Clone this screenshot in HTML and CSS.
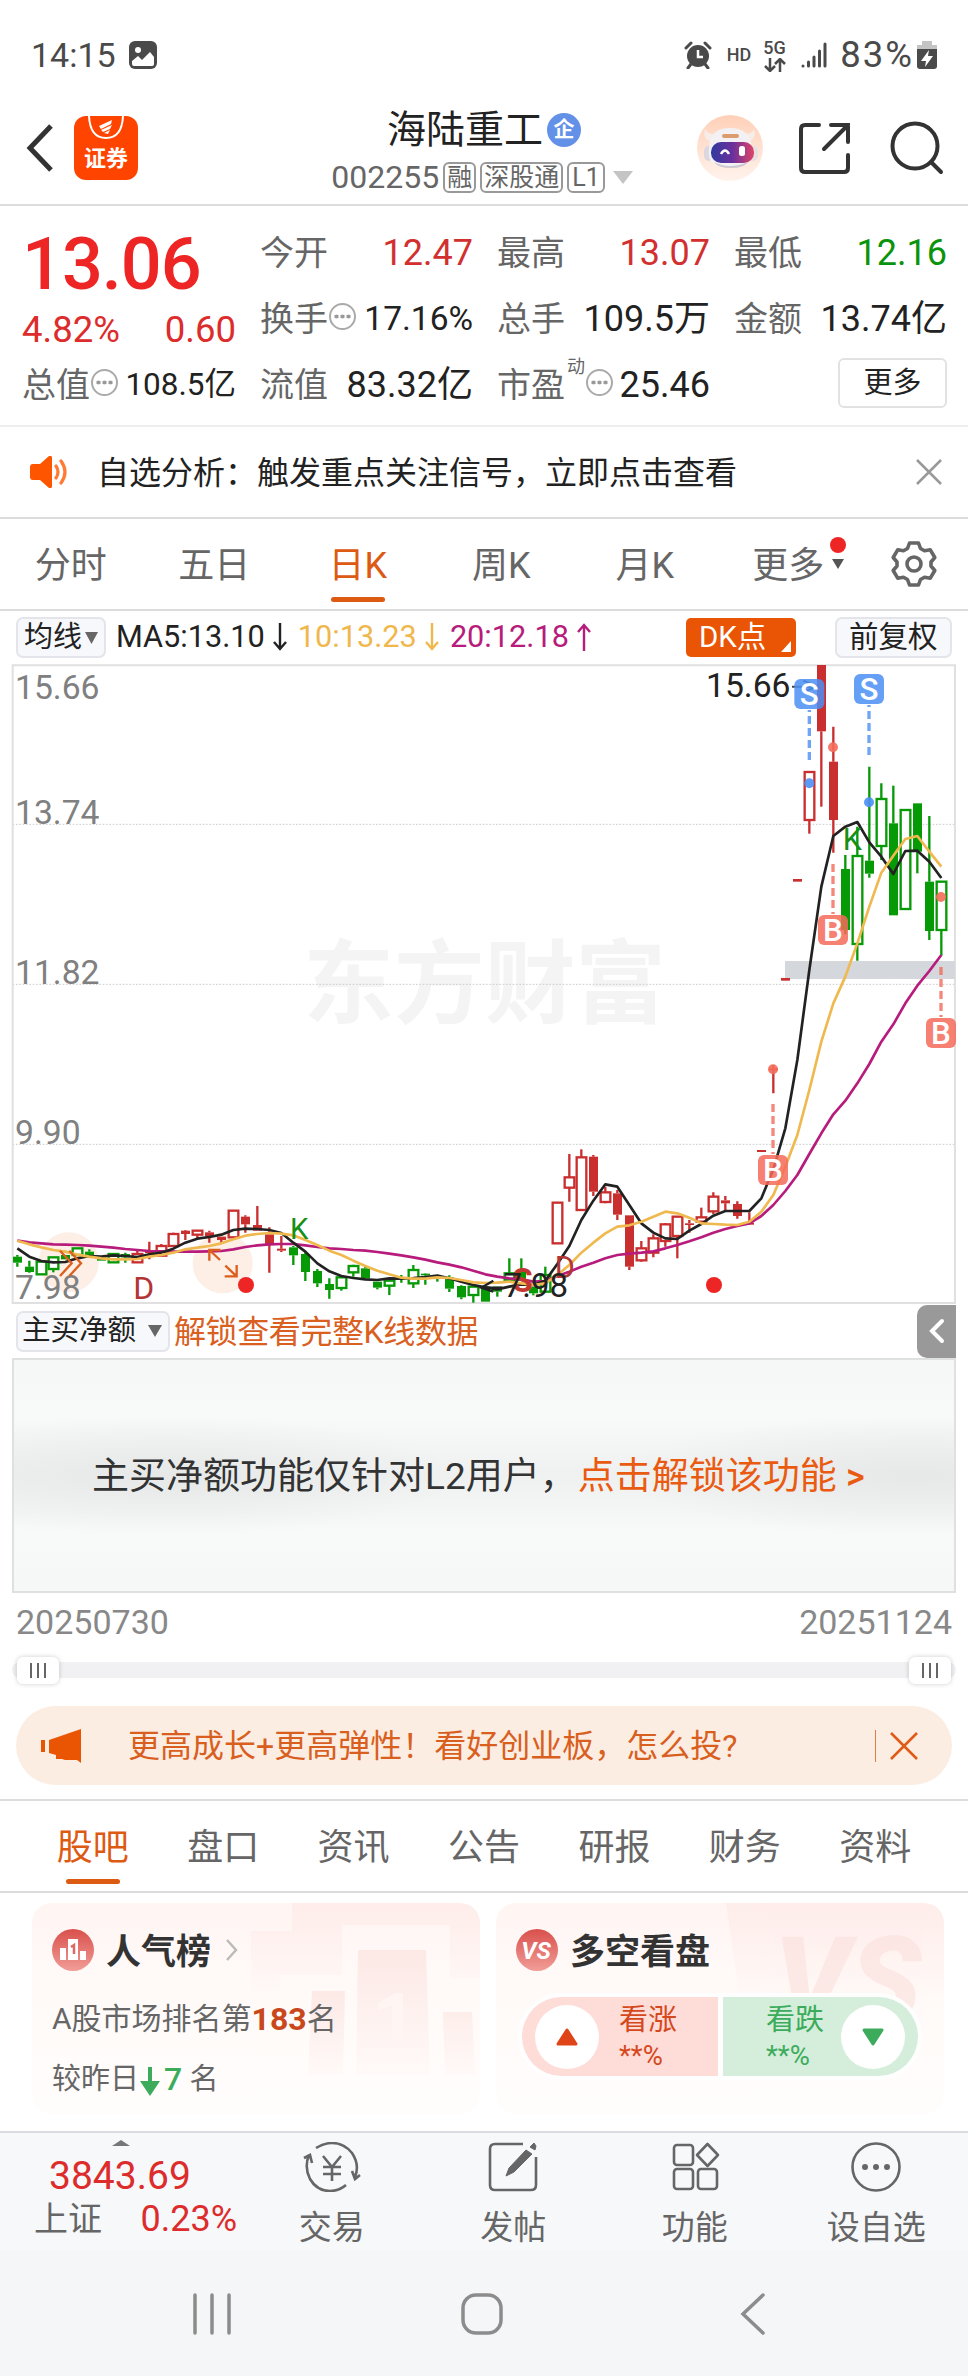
FILE: index.html
```html
<!DOCTYPE html>
<html lang="zh-CN">
<head>
    <meta charset="UTF-8" />
    <meta name="viewport" content="width=device-width, initial-scale=1.0" />
    <title>海陆重工 002255</title>
    <link rel="stylesheet" href="styles.css">
</head>
<body>
    <div class="status-bar">
        <span>14:15</span>
        <svg class="status-photo" width="28" height="28" viewBox="0 0 28 28">
            <rect width="28" height="28" rx="6" fill="#4a4a4a"/>
            <circle cx="9" cy="9" r="3" fill="#fff"/>
            <path d="M3 23v-3l6-5 4 4 8-8 4 5v7q0 2-2 2H5q-2 0-2-2z" fill="#fff"/>
        </svg>
        <div class="status-right">
            <svg width="28" height="28" viewBox="0 0 28 28">
                <circle cx="14" cy="15" r="11" fill="#4a4a4a"/>
                <path d="M2 7l5-5M26 7l-5-5M7 23l-3 4M21 23l3 4" stroke="#4a4a4a" stroke-width="3" stroke-linecap="round"/>
                <path d="M14 9v7h5" stroke="#fff" stroke-width="2.5" fill="none"/>
            </svg>
            <b class="status-hd">HD</b>
            <div class="status-5g">
                <b>5G</b>
                <svg width="24" height="14" viewBox="0 0 24 14" fill="none" stroke="#4a4a4a" stroke-width="2.5">
                    <path d="M7 0v12M2 8l5 5 5-5M17 14V2M12 6l5-5 5 5"/>
                </svg>
            </div>
            <svg width="27" height="26" viewBox="0 0 27 26" stroke="#4a4a4a" stroke-width="3" stroke-linecap="round">
                <path d="M2 24v0M7.500 24v-4M13 24v-9M18.500 24V9M24 24V2"/>
            </svg>
            <span class="status-pct">83%</span>
            <svg width="20" height="30" viewBox="0 0 20 30">
                <path d="M5 1h10v4h5v5H0V5h5z" fill="#c4c4c4"/>
                <path d="M0 9h20v17q0 3-3 3H3q-3 0-3-3z" fill="#4a4a4a"/>
                <path d="M12 10l-8 11h5l-1 6 8-11h-5z" fill="#fff"/>
            </svg>
        </div>
    </div>

    <header class="header">
        <div class="header-left">
            <svg width="28" height="50" viewBox="0 0 28 50" fill="none" stroke="#333" stroke-width="5">
                <path d="M25 3L4 25l21 22"/>
            </svg>
            <div class="app-logo">
                <svg width="44" height="26" viewBox="0 0 44 26" fill="none" stroke="#fff" stroke-width="2">
                    <path d="M5 0q1 22 17 22T39 0"/>
                    <path d="M15 10l13-6-1 4-10 5zM17 14l11-5-2 4-7 3zM20 17l6-3-2 4z" fill="#fff" stroke="none"/>
                </svg>
                <span>证券</span>
            </div>
        </div>
        <div class="header-title">
            <div class="stock-name">海陆重工<i>企</i></div>
            <div class="stock-code">
                002255<em>融</em><em>深股通</em><em>L1</em>
                <svg width="20" height="13" viewBox="0 0 20 13"><path d="M0 0h20L10 13z" fill="#c4c4c4"/></svg>
            </div>
        </div>
        <div class="header-right">
            <svg width="66" height="66" viewBox="0 0 66 66">
                <defs>
                    <linearGradient id="halo" x1="0" y1="0" x2="0" y2="1">
                        <stop offset="0" stop-color="#ffd0b8"/><stop offset="1" stop-color="#fff3ec"/>
                    </linearGradient>
                    <linearGradient id="visor">
                        <stop offset="0" stop-color="#303a9e"/><stop offset=".5" stop-color="#6a309c"/><stop offset="1" stop-color="#e04468"/>
                    </linearGradient>
                </defs>
                <circle cx="33" cy="33" r="33" fill="url(#halo)"/>
                <path d="M8 14q2 5 9 5l-3 8q-9-3-6-13zM57 14q-2 5-9 5l3 8q9-3 6-13z" fill="#f6ece8"/>
                <rect x="7" y="31" width="10" height="15" rx="5" fill="#dcd6de"/>
                <rect x="51" y="31" width="10" height="15" rx="5" fill="#e6dfe4"/>
                <path d="M12 34q0-21 21-21t22 21q2 19-22 19T12 34z" fill="#f4f1f4"/>
                <path d="M17 47q15 8 34 0-4 6-17 6t-17-6z" fill="#cfc8d0"/>
                <rect x="25" y="19" width="17" height="4" rx="2" fill="#dd9c6d"/>
                <rect x="14" y="27" width="43" height="21" rx="10" fill="url(#visor)"/>
                <path d="M24 39q4-7 8 0" fill="none" stroke="#fff" stroke-width="2.500"/>
                <rect x="42" y="31" width="6" height="10" rx="2.500" fill="#fff"/>
            </svg>
            <svg class="share" width="52" height="52" viewBox="0 0 52 52" fill="none" stroke="#333" stroke-width="4" stroke-linecap="round">
                <path d="M20 3H6Q2 3 2 7v39q0 4 4 4h39q4 0 4-4V33M32 3h17v17M49 3L25 27"/>
            </svg>
            <svg width="54" height="54" viewBox="0 0 54 54" fill="none" stroke="#333" stroke-width="4" stroke-linecap="round">
                <circle cx="25" cy="25" r="22.500"/><path d="M41 41l10 10"/>
            </svg>
        </div>
    </header>

    <section class="quote">
        <div class="quote-col quote-main">
            <div class="price">13.06</div>
            <div class="change"><span>4.82%</span><span>0.60</span></div>
            <div class="cell"><label>总值</label><i class="dots"></i><span class="num sm">108.5亿</span></div>
        </div>
        <div class="quote-col">
            <div class="cell"><label>今开</label><span class="num red">12.47</span></div>
            <div class="cell"><label>换手</label><i class="dots"></i><span class="num md">17.16%</span></div>
            <div class="cell"><label>流值</label><span class="num">83.32亿</span></div>
        </div>
        <div class="quote-col">
            <div class="cell"><label>最高</label><span class="num red">13.07</span></div>
            <div class="cell"><label>总手</label><span class="num">109.5万</span></div>
            <div class="cell"><label>市盈</label><sup>动</sup><i class="dots"></i><span class="num">25.46</span></div>
        </div>
        <div class="quote-col">
            <div class="cell"><label>最低</label><span class="num green">12.16</span></div>
            <div class="cell"><label>金额</label><span class="num">13.74亿</span></div>
            <div class="cell"><button class="more-btn">更多</button></div>
        </div>
    </section>

    <div class="notice">
        <svg width="40" height="32" viewBox="0 0 40 32">
            <path d="M3 8h7l9-8q3-1 3 2v28q0 3-3 2l-9-8H3q-3 0-3-3V11q0-3 3-3z" fill="#fe5500"/>
            <path d="M26 10q4 6 0 12M31 5q8 11 0 22" fill="none" stroke="#fe7a35" stroke-width="3.200" stroke-linecap="round"/>
        </svg>
        <span>自选分析：触发重点关注信号，立即点击查看</span>
        <svg class="close" width="26" height="26" viewBox="0 0 26 26" stroke="#999" stroke-width="2.500"><path d="M1 1l24 24M25 1L1 25"/></svg>
    </div>

    <nav class="k-tabs">
        <a>分时</a>
        <a>五日</a>
        <a class="active">日K</a>
        <a>周K</a>
        <a>月K</a>
        <a class="k-more">更多<i></i></a>
        <svg class="gear" width="46" height="46" viewBox="0 0 46 46" fill="none" stroke="#666" stroke-width="3.600" stroke-linejoin="round">
            <path d="M18.500 2h9l2 5.500 4 2.300 5.800-1 4.500 7.700-3.800 4.500v4l3.800 4.500-4.500 7.700-5.800-1-4 2.300-2 5.500h-9l-2-5.500-4-2.300-5.800 1-4.500-7.700L6 25v-4l-3.800-4.500 4.500-7.700 5.800 1 4-2.300z"/>
            <circle cx="23" cy="23" r="7"/>
        </svg>
    </nav>

    <div class="ma-bar">
        <button class="chip ma-chip">均线<svg width="13" height="12" viewBox="0 0 13 12"><path d="M0 0h13L6.500 12z" fill="#666"/></svg></button>
        <span class="ma5">MA5:13.10<svg width="16" height="28" viewBox="0 0 16 28"><path d="M8 0v26M2 19l6 7 6-7"/></svg></span>
        <span class="ma10">10:13.23<svg width="16" height="28" viewBox="0 0 16 28"><path d="M8 0v26M2 19l6 7 6-7"/></svg></span>
        <span class="ma20">20:12.18<svg width="16" height="28" viewBox="0 0 16 28"><path d="M8 28V2M2 9l6-7 6 7"/></svg></span>
        <button class="dk">DK点<i></i></button>
        <button class="chip fq">前复权</button>
    </div>

    <!-- one unit = a third of a pixel, candles are 36 units apart -->
    <svg class="chart" width="968" height="640" viewBox="0 0 2904 1920">
        <text class="watermark" x="910" y="1056">东方财富</text>
        <g class="grid">
            <path d="M38 481H2865M38 961H2865M38 1441H2865"/>
        </g>
        <path class="frame" d="M38 4H2865V1917H38Z"/>
        <rect x="2355" y="891" width="510" height="54" fill="#d4d7dc"/>
        <circle cx="206" cy="1795" r="90" fill="#fdeee6"/>
        <circle cx="668" cy="1798" r="90" fill="#fdeee6"/>
        <g class="axis">
            <text x="45" y="104">15.66</text>
            <text x="45" y="480">13.74</text>
            <text x="45" y="960">11.82</text>
            <text x="45" y="1440">9.90</text>
            <text x="45" y="1906">7.98</text>
        </g>
        <g id="candles"></g>
        <g id="lines"></g>
        <path class="hint" d="M180 1760l35 38-35 38M208 1760l35 38-35 38M660 1788l-32-30M628 1790v-32h34M676 1805l34 32M710 1803v34h-36"/>
        <g class="marks">
            <text x="400" y="1904" font-size="96" fill="#b23535">D</text>
            <text x="870" y="1724" font-size="88" fill="#159015">K</text>
            <text x="1664" y="1843" font-size="92" fill="#b23535">D</text>
            <text x="1537" y="1884" font-size="100" font-weight="700" fill="#c43832">S</text>
            <text x="2528" y="558" font-size="92" fill="#159015">K</text>
            <text x="1511" y="1898" font-size="99" fill="#222">7.98</text>
            <text x="2118" y="98" font-size="101" fill="#222">15.66</text>
        </g>
        <path d="M1508 1871h-50M1480 1850l-36 21 36 12" fill="none" stroke="#222" stroke-width="7"/>
        <path d="M2376 68h75M2410 50l44 18-44 15" fill="none" stroke="#444" stroke-width="6"/>
        <circle cx="738" cy="1863" r="24" fill="#ee2525"/>
        <circle cx="2142" cy="1863" r="24" fill="#ee2525"/>
        <g id="signals"></g>
    </svg>

    <div class="sub-bar">
        <button class="chip">主买净额<svg width="14" height="12" viewBox="0 0 14 12"><path d="M0 0h14L7 12z" fill="#666"/></svg></button>
        <span>解锁查看完整K线数据</span>
        <button class="collapse">
            <svg width="16" height="26" viewBox="0 0 16 26" fill="none" stroke="#fff" stroke-width="4" stroke-linecap="round"><path d="M13 3L3 13l10 10"/></svg>
        </button>
    </div>
    <div class="l2-panel">
        主买净额功能仅针对L2用户，<a>点击解锁该功能 <b>&gt;</b></a>
    </div>
    <div class="dates"><span>20250730</span><span>20251124</span></div>
    <div class="range"><div class="track"><i></i><i></i></div></div>

    <div class="banner">
        <svg width="40" height="34" viewBox="0 0 40 34" fill="#ea5504">
            <path d="M0 11h4v12H0zM8 11L40 0v34l-4-3H24l-3 -1h-6v-4l-7-2z"/>
        </svg>
        <span>更高成长+更高弹性！看好创业板，怎么投?</span>
        <i></i>
        <svg width="28" height="28" viewBox="0 0 28 28" stroke="#de5c18" stroke-width="2.600"><path d="M1 1l26 26M27 1L1 27"/></svg>
    </div>

    <nav class="info-tabs">
        <a class="active">股吧</a>
        <a>盘口</a>
        <a>资讯</a>
        <a>公告</a>
        <a>研报</a>
        <a>财务</a>
        <a>资料</a>
    </nav>

    <div class="cards">
        <div class="card">
            <svg class="card-bg" width="448" height="210" viewBox="0 0 448 210">
                <defs>
                    <linearGradient id="fade" x1="0" y1="0" x2="0" y2="1">
                        <stop offset="0" stop-color="#fbdcd8" stop-opacity=".55"/><stop offset="1" stop-color="#fbdcd8" stop-opacity=".08"/>
                    </linearGradient>
                </defs>
                <path d="M260 0H448V75H418V22H310V72H248V90H219V28h41z" fill="url(#fade)" opacity=".6"/>
                <path d="M326 47h68l4 125h-74z" fill="url(#fade)"/>
                <path d="M280 88h33l-2 84h-35zM411 109h29l3 63h-30z" fill="url(#fade)"/>
                <path d="M371 90v48h-11v-35l-14 4v-7l18-10z" fill="#fff6f4"/>
            </svg>
            <div class="card-title">
                <svg width="42" height="42" viewBox="0 0 42 42">
                    <defs>
                        <linearGradient id="badge" x1="0" y1="0" x2="0" y2="1">
                            <stop offset="0" stop-color="#d9504c"/><stop offset="1" stop-color="#f19d98"/>
                        </linearGradient>
                    </defs>
                    <circle cx="21" cy="21" r="21" fill="url(#badge)"/>
                    <path d="M16 10h10v21H16zM8 19h6v12H8zM28 22h6v9h-6z" fill="#fff"/>
                    <path d="M19 18l3-2v9" fill="none" stroke="#dd6864" stroke-width="2.500"/>
                </svg>
                <b>人气榜</b>
                <svg width="14" height="22" viewBox="0 0 14 22" fill="none" stroke="#bbb" stroke-width="2.500"><path d="M2 1l9 10-9 10"/></svg>
            </div>
            <p>A股市场排名第<strong>183</strong>名</p>
            <p class="p2">较昨日<svg width="22" height="30" viewBox="0 0 22 30" fill="#3cac5c"><path d="M9 1h4v14h8L11 30 1 15h8z"/></svg><em>7</em> 名</p>
        </div>
        <div class="card">
            <svg class="card-bg" width="448" height="210" viewBox="0 0 448 210">
                <path d="M230 0H448V92H243z" fill="url(#fade)" opacity=".6"/>
                <text class="vs-ghost" x="278" y="118">VS</text>
            </svg>
            <div class="card-title">
                <svg width="42" height="42" viewBox="0 0 42 42">
                    <circle cx="21" cy="21" r="21" fill="url(#badge)"/>
                    <text class="vs" x="20" y="30">VS</text>
                </svg>
                <b>多空看盘</b>
            </div>
            <div class="vote">
                <div class="up">
                    <i><svg width="22" height="18" viewBox="0 0 22 18"><path d="M11 2l9 14H2z" fill="#de4518" stroke="#de4518" stroke-width="3" stroke-linejoin="round"/></svg></i>
                    <span>看涨<small>**%</small></span>
                </div>
                <div class="down">
                    <span>看跌<small>**%</small></span>
                    <i><svg width="22" height="18" viewBox="0 0 22 18"><path d="M11 16l9-14H2z" fill="#3cac5c" stroke="#3cac5c" stroke-width="3" stroke-linejoin="round"/></svg></i>
                </div>
            </div>
        </div>
    </div>

    <footer class="toolbar">
        <div class="index">
            <svg width="18" height="6" viewBox="0 0 18 6"><path d="M9 0l9 6H0z" fill="#777"/></svg>
            <div class="index-val">3843.69</div>
            <div class="index-row"><span>上证</span><b>0.23%</b></div>
        </div>
        <div class="tool">
            <svg width="58" height="50" viewBox="0 0 58 50">
                <path d="M13 6Q21 1 29 1q12 0 20 10 8 12 3 24M43 43q-7 6-16 6-13 0-20-12-6-12-1-24M1 16l6-3 2 8M57 33l-5 4-3-8"/>
                <path d="M20 14l9 11 9-11M29 25v14M20 25h18M20 32h18"/>
            </svg>
            交易
        </div>
        <div class="tool">
            <svg width="50" height="50" viewBox="0 0 50 50">
                <path d="M35 2H7Q2 2 2 7v36q0 5 5 5h36q5 0 5-5V15"/>
                <path d="M38 8l6 4-18 18-8 4 3-8zM42 5l4-4 2 3-1 4z" fill="#666" stroke-width="1"/>
            </svg>
            发帖
        </div>
        <div class="tool">
            <svg width="50" height="50" viewBox="0 0 50 50">
                <rect x="4" y="3" width="19" height="20" rx="3"/><rect x="4" y="27" width="19" height="20" rx="3"/><rect x="28" y="27" width="19" height="20" rx="3"/>
                <path d="M37.500 2l10.500 11-10.500 11L27 13z" stroke-linejoin="round"/>
            </svg>
            功能
        </div>
        <div class="tool">
            <svg width="50" height="50" viewBox="0 0 50 50">
                <circle cx="25" cy="25" r="23.500"/>
                <path d="M14 25h0M25 25h0M36 25h0" stroke-width="6" stroke-linecap="round"/>
            </svg>
            设自选
        </div>
    </footer>
    <div class="sys-nav">
        <svg width="40" height="42" viewBox="0 0 40 42"><path d="M3 2v38M20 2v38M37 2v38"/></svg>
        <svg class="home" width="42" height="42" viewBox="0 0 42 42"><rect x="2" y="2" width="38" height="38" rx="13"/></svg>
        <svg width="26" height="42" viewBox="0 0 26 42"><path d="M23 2L3 21l20 19"/></svg>
    </div>

    <script src="chart.js"></script>
</body>
</html>
```
FILE: styles.css
```css
* {
    box-sizing: border-box;
}
body {
    margin: 0;
    width: 968px;
    background: #fff;
    color: #222;
    font-family: Roboto, "Noto Sans CJK SC", sans-serif;
    font-size: 34px;
    line-height: 1;
}
svg {
    display: block;
    flex: none;
}
i, em {
    font-style: normal;
}
button {
    font: inherit;
    color: #222;
    padding: 0;
}
.red {
    color: #d2302f !important;
}
.green {
    color: #0b930b !important;
}

/* status bar */
.status-bar {
    height: 110px;
    display: flex;
    align-items: center;
    padding: 0 31px;
    color: #4a4a4a;
}
.status-photo {
    margin-left: 13px;
}
.status-right {
    margin-left: auto;
    display: flex;
    align-items: center;
}
.status-hd {
    font-size: 18px;
    margin: 0 12px 0 15px;
    font-weight: 500;
}
.status-5g {
    width: 27px;
    margin-right: 11px;
    font-size: 18px;
}
.status-5g b {
    display: block;
    font-weight: 500;
    margin-bottom: 1px;
}
.status-pct {
    margin: 0 3px 0 12px;
    font-size: 36.500px;
    letter-spacing: 2px;
}

/* header */
.header {
    height: 96px;
    display: grid;
    grid-template-columns: 1fr 310px 1fr;
    align-items: center;
    border-bottom: 2px solid #dcdcdc;
}
.header-left {
    display: flex;
    align-items: center;
    gap: 20px;
    padding: 0 0 19px 26px;
}
.app-logo {
    width: 64px;
    height: 64px;
    border-radius: 12px;
    background: #ff4400;
    color: #fff;
    display: flex;
    flex-direction: column;
    align-items: center;
    font: 600 22px "Noto Sans CJK SC", sans-serif;
    line-height: 28px;
}
.header-title {
    display: flex;
    flex-direction: column;
    align-items: center;
    margin-top: -4px;
}
.stock-name {
    font-size: 39px;
    line-height: 44px;
    display: flex;
    align-items: center;
}
.stock-name i {
    width: 34px;
    height: 34px;
    border-radius: 50%;
    background: #6491e8;
    color: #fff;
    font-size: 21px;
    font-weight: 700;
    line-height: 33px;
    text-align: center;
    margin-left: 4px;
}
.stock-code {
    display: flex;
    align-items: center;
    font-size: 32px;
    color: #666;
    white-space: nowrap;
    height: 50px;
    margin-left: -4px;
}
.stock-code em {
    border: 2px solid #999;
    border-radius: 6px;
    font-size: 25px;
    line-height: 28px;
    height: 31px;
    padding: 0 2px;
    margin-left: 4px;
}
.stock-code em:nth-of-type(3) {
    padding: 0 3px;
}
.stock-code svg {
    margin-left: 8px;
}
.header-right {
    display: flex;
    align-items: center;
    justify-content: flex-end;
    gap: 36px;
    padding: 0 24px 19px 0;
}
.share {
    margin-right: 3px;
}

/* quote */
.quote {
    height: 221px;
    display: grid;
    grid-template-columns: 214px 213px 213px 213px;
    column-gap: 24px;
    padding: 14px 0 0 22px;
    border-bottom: 2px solid #eee;
}
.cell {
    height: 66px;
    display: flex;
    align-items: center;
    white-space: nowrap;
}
.cell label {
    color: #666;
}
.num {
    margin-left: auto;
    font-size: 36px;
}
.num.md {
    font-size: 33.500px;
}
.num.sm {
    font-size: 31.500px;
}
.cell sup {
    font-size: 18px;
    color: #666;
    align-self: flex-start;
    margin: 5px 0 0 2px;
    line-height: 20px;
}
.dots {
    width: 27px;
    height: 27px;
    border: 2px solid #aaa;
    border-radius: 50%;
    margin: -6px 0 0 1px;
    background: radial-gradient(circle, #999 1.800px, transparent 2.200px) 50% 50% / 6px 23px repeat-x;
    background-clip: content-box;
    padding: 0 2px;
}
.price {
    height: 86px;
    font-size: 72px;
    font-weight: 500;
    line-height: 90px;
    color: #ee2525;
    letter-spacing: -1px;
}
.change {
    height: 46px;
    display: flex;
    justify-content: space-between;
    font-size: 36.500px;
    line-height: 47px;
    color: #dc2c2c;
}
.more-btn {
    width: 109px;
    height: 50px;
    margin: -4px 0 0 104px;
    border: 2px solid #e2e2e2;
    border-radius: 6px;
    background: #fff;
    font-size: 29px;
}

/* notice */
.notice {
    height: 92px;
    display: flex;
    align-items: center;
    padding: 0 26px 0 30px;
    font-size: 32px;
    border-bottom: 2px solid #dcdcdc;
}
.notice span {
    margin: 2px 0 0 27px;
}
.notice .close {
    margin-left: auto;
}

/* period tabs */
.k-tabs {
    height: 92px;
    display: flex;
    align-items: center;
    border-bottom: 2px solid #dcdcdc;
    color: #666;
    font-size: 36px;
}
.k-tabs a {
    position: relative;
    width: 143.500px;
    padding-right: 2px;
    text-align: center;
    height: 90px;
    line-height: 94px;
}
.k-tabs .active::after,
.info-tabs .active::after {
    content: "";
    position: absolute;
    left: 50%;
    bottom: 7px;
    width: 54px;
    height: 5px;
    margin-left: -28px;
    border-radius: 3px;
    background: #dd5a12;
}
.active {
    color: #dd5a12;
}
.k-more i {
    position: absolute;
    left: 114px;
    top: 40px;
    border: 6px solid transparent;
    border-top: 10px solid #555;
    border-bottom: 0;
}
.k-more::before {
    content: "";
    position: absolute;
    left: 112px;
    top: 18px;
    width: 16px;
    height: 16px;
    border-radius: 50%;
    background: #ee2525;
}
.gear {
    margin-left: 30px;
}

/* moving averages */
.ma-bar {
    height: 53px;
    display: flex;
    align-items: center;
    padding: 0 16px 0 16px;
    font-size: 30.700px;
}
.chip {
    height: 41px;
    border: 2px solid #e3e5ea;
    border-radius: 7px;
    background: #f7f8fb;
    font-size: 29px;
    display: flex;
    align-items: center;
    padding: 0 6px;
    white-space: nowrap;
}
.ma-bar span {
    display: flex;
    align-items: center;
    margin-left: 10px;
}
.ma-bar span svg {
    margin-left: 7px;
    fill: none;
    stroke: currentColor;
    stroke-width: 2.400;
}
.ma-chip svg {
    margin-left: 3px;
}
.ma5 {
    color: #222;
}
.ma10 {
    color: #f0b84c;
}
.ma20 {
    color: #b71c7c;
}
.dk {
    position: relative;
    width: 110px;
    height: 39px;
    margin-left: auto;
    border: 0;
    border-radius: 5px;
    background: #e95504;
    color: #fff;
    font-size: 29.500px;
    text-align: left;
    padding-left: 13px;
}
.dk i {
    position: absolute;
    right: 5px;
    bottom: 5px;
    border-left: 10px solid transparent;
    border-bottom: 11px solid #fff;
}
.fq {
    margin-left: 39px;
    width: 117px;
    padding: 0 12px;
    font-size: 29.500px;
}

/* chart */
.chart {
    overflow: visible;
}
.chart text {
    font-family: Roboto, "Noto Sans CJK SC", sans-serif;
}
.chart .watermark {
    font: 700 272px "Noto Sans CJK SC", sans-serif;
    fill: #f4f4f4;
}
.grid path {
    fill: none;
    stroke: #ccc;
    stroke-width: 3;
    stroke-dasharray: 5 5;
}
.frame {
    fill: none;
    stroke: #e0e0e0;
    stroke-width: 6;
}
.axis {
    fill: #808080;
    font-size: 101px;
}
.hint {
    fill: none;
    stroke: #dd5f1d;
    stroke-width: 7;
}

/* sub chart */
.sub-bar {
    height: 54px;
    display: flex;
    align-items: center;
    padding: 0 12px 0 16px;
    font-size: 32px;
    color: #d9601f;
}
.sub-bar .chip {
    width: 154px;
    padding: 0 6px 0 4px;
    justify-content: space-between;
    font-size: 28.500px;
}
.sub-bar span {
    margin: 2px 0 0 4px;
    letter-spacing: -0.400px;
}
.collapse {
    margin-left: auto;
    width: 39px;
    height: 53px;
    border: 0;
    border-radius: 10px 0 0 10px;
    background: #999;
    display: flex;
    align-items: center;
    justify-content: center;
}
.l2-panel {
    height: 235px;
    margin: 0 12px;
    border: 2px solid #dfe1e0;
    background:
        radial-gradient(ellipse 300px 60px at 16% 50%, #e7e9e8, transparent),
        radial-gradient(ellipse 300px 60px at 96% 50%, #e7e9e8, transparent),
        linear-gradient(#f6f8f7, #f8faf9 25%, #eff0f0 50%, #f8faf9 75%, #f6f8f7);
    color: #333;
    font-size: 37px;
    line-height: 233px;
    padding-left: 78px;
    white-space: nowrap;
}
.l2-panel a {
    color: #ea5b12;
    margin-left: 1px;
}
.l2-panel b {
    font-size: 36px;
    font-weight: 500;
}
.dates {
    height: 58px;
    display: flex;
    justify-content: space-between;
    padding: 0 16px;
    font-size: 34px;
    line-height: 58px;
    color: #888;
}
.range {
    height: 55px;
    padding: 11px 12px;
}
.track {
    height: 16px;
    border-radius: 8px;
    background: #f1f1f4;
    display: flex;
    align-items: center;
    justify-content: space-between;
    padding: 0 5px;
}
.track i {
    width: 42px;
    height: 27px;
    border-radius: 6px;
    box-shadow: 0 0 5px rgba(0, 0, 0, 0.2);
    background: repeating-linear-gradient(90deg, #666 0 2px, #fff 2px 7px) 13px 6px / 16px 15px no-repeat #fff;
}

/* banner */
.banner {
    height: 79px;
    margin: 0 16px 14px;
    border-radius: 40px;
    background: #fcede3;
    color: #d95f1e;
    display: flex;
    align-items: center;
    padding: 0 34px 0 25px;
    font-size: 32px;
}
.banner span {
    margin: 1px 0 0 47px;
}
.banner i {
    width: 1px;
    height: 32px;
    background: #dd7c4c;
    margin: 0 14px 0 auto;
}

/* info tabs */
.info-tabs {
    height: 94px;
    border-top: 2px solid #dcdcdc;
    border-bottom: 2px solid #dcdcdc;
    display: flex;
    padding: 0 27px 0 28px;
    font-size: 36px;
    line-height: 95px;
    color: #666;
}
.info-tabs a {
    position: relative;
    flex: 1;
    height: 90px;
    text-align: center;
    padding-right: 1px;
}
.info-tabs .active::after {
    margin-left: -27px;
}

/* cards */
.cards {
    height: 238px;
    display: flex;
    gap: 16px;
    padding: 10px 24px 0 32px;
}
.card {
    position: relative;
    width: 448px;
    height: 211px;
    border-radius: 20px;
    background: linear-gradient(#fff5f3, #fffaf8 40%, #fffdfc);
    padding: 24px 20px 0 20px;
    overflow: hidden;
    font-size: 30px;
    color: #666;
}
.card-bg {
    position: absolute;
    left: 0;
    top: 0;
}
.card-title,
.card p,
.vote {
    position: relative;
}
.card-title {
    display: flex;
    align-items: center;
    height: 46px;
    font-size: 35px;
    color: #333;
}
.card-title b {
    margin: 4px 14px 0 12px;
}
.card p {
    margin: 28px 0 0;
    height: 36px;
    line-height: 36px;
    display: flex;
    align-items: center;
    white-space: pre;
}
.card .p2 {
    margin-top: 24px;
    font-size: 29px;
}
.card strong {
    color: #c8481c;
    font-size: 32px;
}
.card p em {
    color: #3cac5c;
    font-weight: 500;
    font-size: 32px;
    margin-left: 3px;
}
.card .p2 svg {
    margin-top: 4px;
}
.vs {
    font: italic 700 24px Roboto, sans-serif;
    text-anchor: middle;
    fill: #fff;
}
.vs-ghost {
    font: italic 900 118px Roboto, sans-serif;
    fill: #fbe0dd;
    opacity: 0.6;
}
.vote {
    display: flex;
    gap: 5px;
    width: 404px;
    height: 87px;
    margin: 20px 0 0 2px;
    border: 4px solid #fffefe;
    border-radius: 44px;
    background: #fffefe;
    overflow: hidden;
    font-size: 29px;
}
.up,
.down {
    flex: 1;
    display: flex;
    align-items: center;
    background: #fedcd8;
    color: #d5481c;
    padding-left: 13px;
}
.down {
    background: #d5eedb;
    color: #3cac5c;
    justify-content: flex-end;
    padding: 0 13px 0 0;
}
.vote i {
    width: 64px;
    height: 64px;
    border-radius: 50%;
    background: #fff;
    display: flex;
    align-items: center;
    justify-content: center;
}
.vote span {
    margin: 0 20px;
    line-height: 38px;
}
.vote small {
    display: block;
    font-size: 27.500px;
    line-height: 33px;
}
.down span {
    margin-right: 17px;
}

/* bottom */
.toolbar {
    height: 119px;
    border-top: 2px solid #d9dbdf;
    background: #f7f8fa;
    display: flex;
}
.index {
    width: 241px;
    padding: 7px 4px 0 34px;
    color: #dc2c2c;
}
.index svg {
    margin-left: 78px;
}
.index-val {
    font-size: 39px;
    line-height: 46px;
    margin: 7px 0 0 15px;
}
.index-row {
    display: flex;
    justify-content: space-between;
    align-items: center;
    height: 40px;
}
.index-row span {
    color: #666;
}
.index-row b {
    font-weight: 400;
    font-size: 36px;
}
.tool {
    width: 181.500px;
    display: flex;
    flex-direction: column;
    align-items: center;
    gap: 19px;
    padding-top: 9px;
    color: #666;
    font-size: 33px;
}
.tool svg {
    fill: none;
    stroke: #666;
    stroke-width: 2.600;
}
.sys-nav {
    height: 126px;
    background: #f5f6f8;
    display: flex;
    align-items: center;
    padding: 2px 202px 0 192px;
    justify-content: space-between;
}
.sys-nav svg {
    fill: none;
    stroke: #8c8c8c;
    stroke-width: 3.500;
    stroke-linecap: round;
}
.sys-nav .home {
    margin-right: 8px;
}
```
FILE: chart.js
```js
// [colour, hollow, body top, body bottom, wick top, wick bottom]
const candles = [
    ["g", 0, 1778, 1796, 1773, 1808], ["g", 0, 1808, 1824, 1790, 1826], ["g", 1, 1793, 1831], ["g", 1, 1780, 1815, 1780, 1825],
    ["g", 0, 1773, 1786], ["g", 1, 1753, 1773], ["g", 0, 1763, 1778, 1756, 1778], ["g", 0, 1780, 1790],
    ["g", 1, 1770, 1795], ["g", 0, 1770, 1780, 1766, 1796], ["r", 1, 1770, 1795, 1760, 1795], ["r", 0, 1761, 1767, 1733, 1786],
    ["r", 1, 1746, 1775, 1740, 1775], ["r", 1, 1710, 1746, 1706, 1746], ["r", 0, 1700, 1710, 1698, 1728], ["r", 1, 1700, 1712, 1700, 1723],
    ["r", 0, 1705, 1718, 1700, 1736], ["r", 0, 1718, 1728, 1718, 1740], ["r", 1, 1640, 1720], ["r", 0, 1658, 1681, 1654, 1706],
    ["r", 0, 1683, 1700, 1626, 1700], ["r", 0, 1711, 1743, 1690, 1826], ["r", 0, 1754, 1760, 1716, 1764], ["g", 0, 1750, 1774, 1746, 1803],
    ["g", 0, 1770, 1824, 1763, 1851], ["g", 0, 1821, 1858, 1815, 1869], ["g", 0, 1860, 1878, 1843, 1904], ["g", 1, 1840, 1872, 1840, 1880],
    ["g", 1, 1806, 1825, 1802, 1838], ["g", 0, 1813, 1843, 1808, 1843], ["g", 0, 1853, 1871, 1853, 1876], ["g", 1, 1850, 1865, 1850, 1893],
    ["g", 0, 1840, 1845, 1833, 1856], ["g", 1, 1818, 1858, 1803, 1872], ["g", 0, 1829, 1834, 1828, 1862], ["g", 0, 1840, 1845, 1840, 1853],
    ["g", 0, 1840, 1874, 1834, 1884], ["g", 0, 1866, 1900, 1864, 1906], ["g", 1, 1868, 1893, 1868, 1916], ["g", 0, 1868, 1913],
    ["g", 0, 1868, 1883, 1868, 1898], ["g", 1, 1828, 1848, 1783, 1848], ["g", 0, 1823, 1850, 1783, 1850], ["g", 0, 1868, 1888, 1868, 1894],
    ["g", 1, 1833, 1883, 1808, 1883], ["r", 1, 1616, 1738], ["r", 1, 1540, 1571, 1470, 1613], ["r", 1, 1480, 1638, 1456, 1638],
    ["r", 0, 1478, 1583, 1473, 1596], ["r", 1, 1585, 1614, 1568, 1618], ["r", 0, 1588, 1652, 1578, 1668], ["r", 0, 1654, 1808, 1654, 1818],
    ["r", 1, 1753, 1789, 1731, 1793], ["r", 1, 1723, 1766, 1711, 1780], ["r", 1, 1681, 1731, 1678, 1748], ["r", 1, 1658, 1716, 1658, 1783],
    ["r", 0, 1678, 1683, 1668, 1706], ["r", 1, 1660, 1673, 1631, 1673], ["r", 1, 1598, 1642, 1585, 1650], ["r", 0, 1609, 1618, 1596, 1638],
    ["r", 0, 1620, 1656, 1612, 1664], ["r", 0, 1676, 1682, 1645, 1683], ["r", 0, 1458, 1464], ["r", 0, 1213, 1219, 1203, 1288],
    ["r", 0, 942, 950], ["r", 0, 645, 653], ["r", 1, 324, 468, 324, 509], ["r", 0, 3, 202, 3, 428],
    ["r", 0, 293, 468, 188, 566], ["g", 0, 615, 798, 573, 811], ["g", 1, 576, 840, 488, 890], ["g", 0, 590, 629, 308, 641],
    ["g", 1, 405, 546, 358, 588], ["g", 0, 478, 754, 365, 754], ["g", 1, 438, 735], ["g", 0, 418, 563, 418, 628],
    ["g", 0, 653, 801, 456, 828], ["g", 1, 653, 798, 653, 875]
];

const ma = {
    "#b71c7c": [1730, 1735, 1738, 1741, 1742, 1743, 1745, 1748, 1751, 1755, 1758, 1761, 1762, 1763, 1763, 1763, 1762, 1761, 1756, 1749,
        1744, 1741, 1740, 1740, 1744, 1749, 1753, 1755, 1758, 1760, 1764, 1769, 1774, 1780, 1787, 1795, 1802, 1810, 1820, 1831,
        1838, 1843, 1846, 1853, 1851, 1836, 1823, 1808, 1796, 1783, 1773, 1769, 1766, 1762, 1753, 1743, 1732, 1720, 1706, 1695,
        1686, 1678, 1656, 1623, 1581, 1533, 1470, 1408, 1351, 1310, 1258, 1200, 1133, 1081, 1018, 965, 921, 873],
    "#222": [1753, 1778, 1791, 1795, 1794, 1783, 1776, 1778, 1774, 1776, 1779, 1771, 1766, 1754, 1736, 1724, 1719, 1712, 1698, 1694,
        1695, 1698, 1707, 1736, 1763, 1798, 1822, 1836, 1842, 1846, 1848, 1843, 1844, 1842, 1839, 1835, 1843, 1853, 1863, 1870,
        1876, 1868, 1861, 1863, 1850, 1800, 1746, 1668, 1610, 1561, 1568, 1623, 1678, 1706, 1723, 1725, 1700, 1680, 1655, 1641,
        1641, 1641, 1603, 1516, 1393, 1188, 918, 668, 516, 488, 474, 535, 578, 630, 561, 560, 593, 642],
    "#efb94f": [1730, 1741, 1750, 1758, 1763, 1772, 1778, 1783, 1786, 1786, 1785, 1778, 1773, 1766, 1756, 1751, 1746, 1738, 1726, 1715,
        1710, 1707, 1709, 1714, 1728, 1743, 1760, 1773, 1790, 1806, 1820, 1831, 1841, 1844, 1844, 1840, 1842, 1848, 1855, 1857,
        1856, 1853, 1858, 1863, 1858, 1833, 1803, 1766, 1736, 1708, 1688, 1684, 1673, 1658, 1643, 1648, 1661, 1678, 1680, 1682,
        1683, 1673, 1643, 1593, 1508, 1413, 1278, 1133, 1018, 938, 838, 728, 626, 575, 525, 516, 563, 608]
};

// letter, badge centre x, badge centre y, far end of the dashed leg, dot y
const signals = [
    ["B", 2319, 1518, 1320, 1216],
    ["B", 2499, 798, 600, 250],
    ["B", 2823, 1107, 909, 699],
    ["S", 2428, 90, 288, 358],
    ["S", 2607, 75, 273, 415]
];

const colors = { g: "#079a07", r: "#c92f2f" };
const xAt = i => 52 + i * 36;

document.getElementById("candles").innerHTML = candles.map(([c, hollow, top, bottom, high, low], i) => {
    const x = xAt(i);
    const color = colors[c];
    let out = "";
    if (high !== undefined) {
        out += `<path d="M${x} ${high}V${top}M${x} ${bottom}V${low}" stroke="${color}" stroke-width="7"/>`;
    }
    out += hollow
        ? `<rect x="${x - 14}" y="${top}" width="29" height="${bottom - top}" fill="#fff" stroke="${color}" stroke-width="7"/>`
        : `<rect x="${x - 13}" y="${top}" width="27" height="${bottom - top}" fill="${color}"/>`;
    return out;
}).join("");

document.getElementById("lines").innerHTML = Object.keys(ma).map(color => {
    const points = ma[color].map((y, i) => xAt(i) + "," + y).join(" ");
    return `<polyline points="${points}" fill="none" stroke="${color}" stroke-width="8" stroke-linejoin="round"/>`;
}).join("");

document.getElementById("signals").innerHTML = signals.map(([letter, x, y, leg, dot]) => {
    const color = letter === "B" ? "#f56b5a" : "#4b8ff5";
    const edge = letter === "B" ? y - 48 : y + 48;
    return `<path d="M${x} ${leg}V${edge}" stroke="${color}" stroke-width="10" stroke-dasharray="24 12" opacity=".8"/>
        <circle cx="${x}" cy="${dot}" r="15" fill="${color}" opacity=".9"/>
        <rect x="${x - 45}" y="${y - 45}" width="90" height="90" rx="18" fill="${color}" opacity=".85"/>
        <text x="${x}" y="${y + 33}" font-size="94" font-weight="500" fill="#fff" text-anchor="middle">${letter}</text>`;
}).join("");
```
